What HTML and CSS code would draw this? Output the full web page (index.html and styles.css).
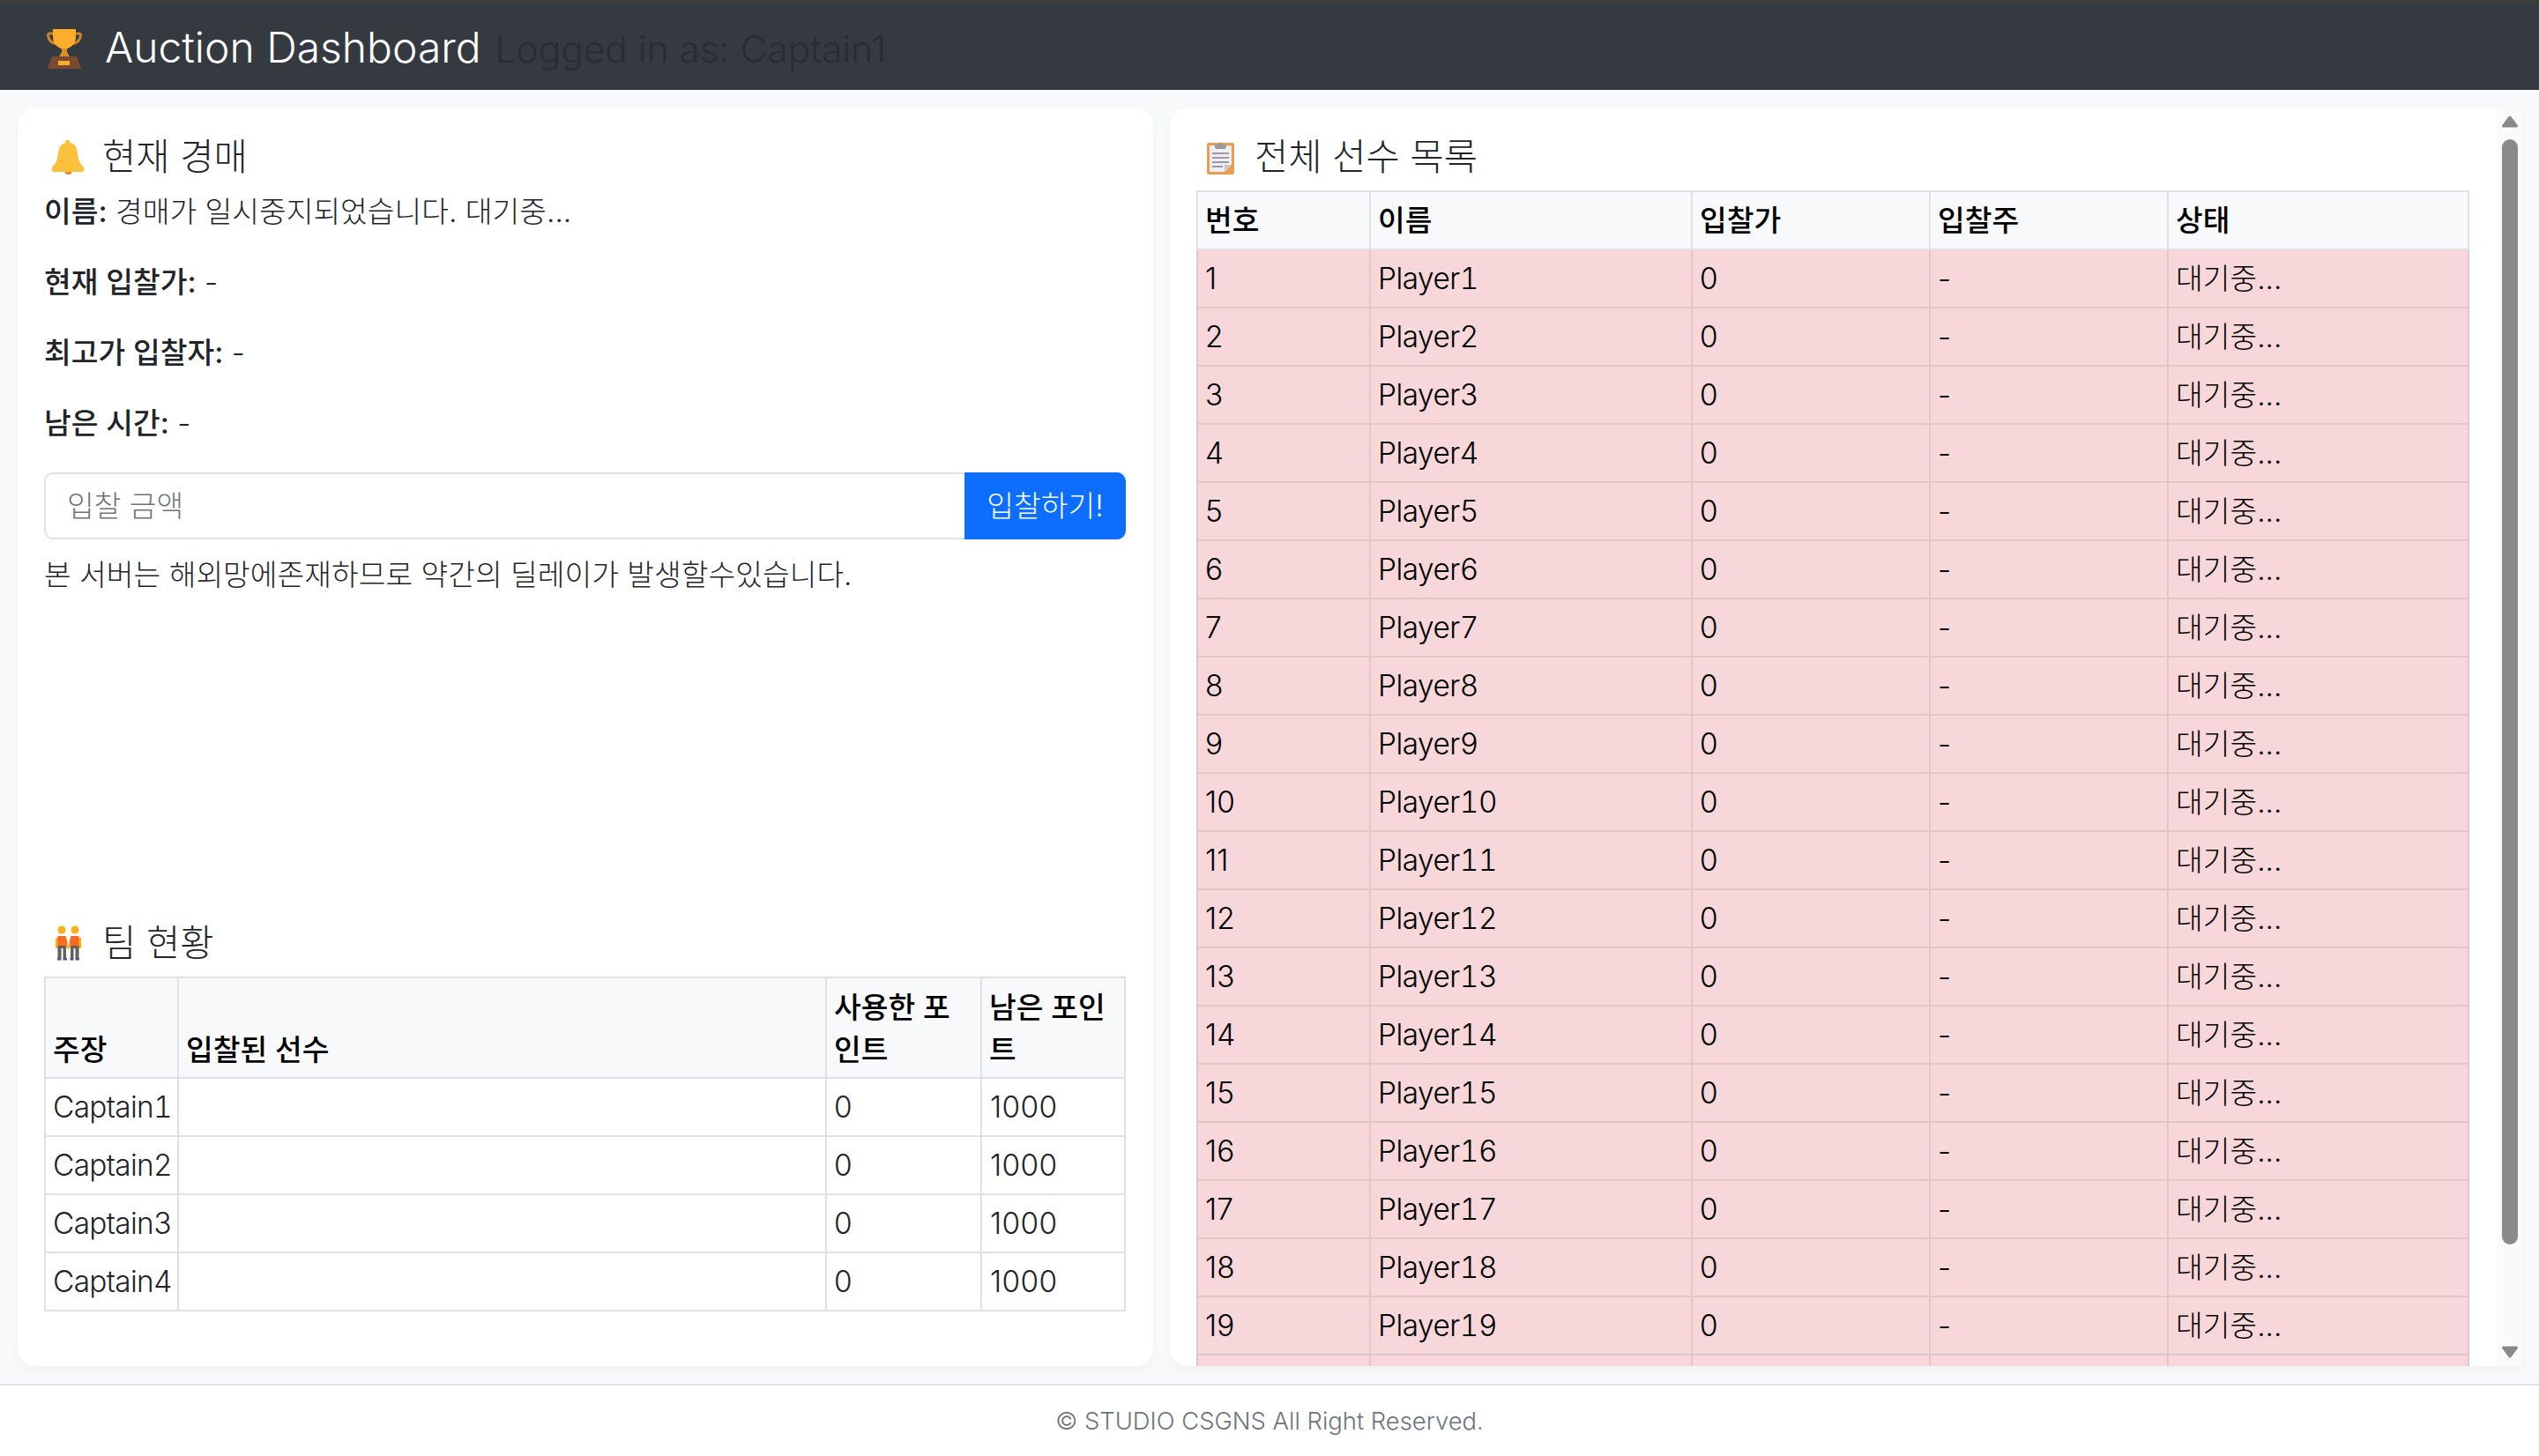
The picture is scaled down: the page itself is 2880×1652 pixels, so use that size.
FILE: index.html
```html
<!DOCTYPE html>
<html lang="ko">
<head>
    <meta charset="UTF-8">
    <title>Auction Dashboard</title>
    <link rel="stylesheet" href="styles.css">
</head>
<body>
    <header class="topbar">
        <span class="topbar__icon">
            <svg width="40" height="46" viewBox="0 0 40 46">
                <path d="M8 6H3.500a2 2 0 0 0-2 2.500c.8 5 3.500 8 8.500 9M32 6h4.500a2 2 0 0 1 2 2.500c-.8 5-3.500 8-8.500 9" fill="none" stroke="#c9822f" stroke-width="3"/>
                <path d="M7 1h26v9c0 8-5 11-10 13.500v5h-6v-5C12 21 7 18 7 10z" fill="#fdad29"/>
                <path d="M17 23h6v4l3 5H14l3-5z" fill="#d98f2d"/>
                <path d="M6 32h28l5 13a1 1 0 0 1-1 1H2a1 1 0 0 1-1-1z" fill="#7a4a30"/>
                <rect x="13" y="37" width="13" height="5" fill="#fdad29"/>
            </svg>
        </span>
        <span class="topbar__title">Auction Dashboard</span>
        <span class="topbar__user">Logged in as: Captain1</span>
    </header>

    <main class="dashboard">
        <section class="card card--auction">
            <div class="auction">
                <h4 class="card__title">
                    <span class="card__icon">
                        <svg width="37" height="39" viewBox="0 0 37 39">
                            <ellipse cx="18.5" cy="36.5" rx="4" ry="2.5" fill="#f4882b"/>
                            <path d="M18.500 0a2 2 0 0 1 1.800 2.900c5.500 1.200 8.200 5.500 8.700 11.900.5 7 2.500 11.500 6.500 15.500 1.700 1.700 1.200 5.700-1.500 5.700H2c-2.700 0-3.200-4-1.500-5.700 4-4 6-8.500 6.500-15.500.5-6.400 3.200-10.700 8.700-11.900A2 2 0 0 1 18.500 0z" fill="#fcc13b"/>
                        </svg>
                    </span>
                    현재 경매
                </h4>
                <p class="auction__line"><strong>이름:</strong> 경매가 일시중지되었습니다. 대기중...</p>
                <p class="auction__line"><strong>현재 입찰가:</strong> -</p>
                <p class="auction__line"><strong>최고가 입찰자:</strong> -</p>
                <p class="auction__line"><strong>남은 시간:</strong> -</p>
                <div class="bid">
                    <input class="bid__input" type="text" placeholder="입찰 금액">
                    <button class="bid__button">입찰하기!</button>
                </div>
                <p class="auction__note">본 서버는 해외망에존재하므로 약간의 딜레이가 발생할수있습니다.</p>
            </div>

            <div class="teams">
                <h4 class="card__title">
                    <span class="card__icon">
                        <svg width="29" height="40" viewBox="0 0 29 40">
                            <path d="M0 14h3v12H0zM26 14h3v12h-3zM11 24l2-5 1.500 4 1.500-4 2 5-3.500 3z" fill="#fbb11f"/>
                            <circle cx="7" cy="5" r="4.500" fill="#fbb11f"/>
                            <circle cx="22" cy="5" r="4.500" fill="#fbb11f"/>
                            <path d="M2.500 12h9l2 7-1.500 4H2.500zM17.500 12h9V23H17l-1.500-4z" fill="#fb6a1e"/>
                            <path d="M2.500 23h9.500v14H8.500V26h-2v11h-4zM17 23h9.500v14h-4V26h-2v11H17z" fill="#616161"/>
                            <path d="M2 37h4.500v2.500H2zM8.500 37H13v2.500H8.500zM16.500 37h4v2.500h-4zM22.500 37H27v2.500h-4.500z" fill="#6a4a8c"/>
                        </svg>
                    </span>
                    팀 현황
                </h4>
                <table class="grid grid--teams">
                    <thead>
                        <tr>
                            <th class="col-captain">주장</th>
                            <th>입찰된 선수</th>
                            <th class="col-used">사용한 포인트</th>
                            <th class="col-left">남은 포인트</th>
                        </tr>
                    </thead>
                    <tbody>
                        <tr><td>Captain1</td><td></td><td>0</td><td>1000</td></tr>
                        <tr><td>Captain2</td><td></td><td>0</td><td>1000</td></tr>
                        <tr><td>Captain3</td><td></td><td>0</td><td>1000</td></tr>
                        <tr><td>Captain4</td><td></td><td>0</td><td>1000</td></tr>
                    </tbody>
                </table>
            </div>
        </section>

        <section class="card card--players">
            <div class="players">
                <h4 class="card__title">
                    <span class="card__icon">
                        <svg width="31" height="39" viewBox="0 0 31 39">
                            <rect x="0" y="3" width="31" height="36" rx="2.500" fill="#ea9d4c"/>
                            <path d="M3 6h25v22l-8 8H3z" fill="#f1edf7"/>
                            <path d="M20 36v-8h8z" fill="#c9c4d0"/>
                            <path d="M9 8V5h4a2.500 2.500 0 0 1 5 0h4v3c0 1-1 2-2 2H11c-1 0-2-1-2-2z" fill="#9b9b9b"/>
                            <path d="M6 14h19v2H6zM6 19h19v2H6zM6 24h19v2H6zM6 29h12v2H6z" fill="#9a9a9f"/>
                        </svg>
                    </span>
                    전체 선수 목록
                </h4>
                <table class="grid grid--players">
                    <thead>
                        <tr>
                            <th class="col-no">번호</th>
                            <th class="col-name">이름</th>
                            <th class="col-price">입찰가</th>
                            <th class="col-bidder">입찰주</th>
                            <th>상태</th>
                        </tr>
                    </thead>
                    <tbody>
                        <tr><td>1</td><td>Player1</td><td>0</td><td>-</td><td>대기중...</td></tr>
                        <tr><td>2</td><td>Player2</td><td>0</td><td>-</td><td>대기중...</td></tr>
                        <tr><td>3</td><td>Player3</td><td>0</td><td>-</td><td>대기중...</td></tr>
                        <tr><td>4</td><td>Player4</td><td>0</td><td>-</td><td>대기중...</td></tr>
                        <tr><td>5</td><td>Player5</td><td>0</td><td>-</td><td>대기중...</td></tr>
                        <tr><td>6</td><td>Player6</td><td>0</td><td>-</td><td>대기중...</td></tr>
                        <tr><td>7</td><td>Player7</td><td>0</td><td>-</td><td>대기중...</td></tr>
                        <tr><td>8</td><td>Player8</td><td>0</td><td>-</td><td>대기중...</td></tr>
                        <tr><td>9</td><td>Player9</td><td>0</td><td>-</td><td>대기중...</td></tr>
                        <tr><td>10</td><td>Player10</td><td>0</td><td>-</td><td>대기중...</td></tr>
                        <tr><td>11</td><td>Player11</td><td>0</td><td>-</td><td>대기중...</td></tr>
                        <tr><td>12</td><td>Player12</td><td>0</td><td>-</td><td>대기중...</td></tr>
                        <tr><td>13</td><td>Player13</td><td>0</td><td>-</td><td>대기중...</td></tr>
                        <tr><td>14</td><td>Player14</td><td>0</td><td>-</td><td>대기중...</td></tr>
                        <tr><td>15</td><td>Player15</td><td>0</td><td>-</td><td>대기중...</td></tr>
                        <tr><td>16</td><td>Player16</td><td>0</td><td>-</td><td>대기중...</td></tr>
                        <tr><td>17</td><td>Player17</td><td>0</td><td>-</td><td>대기중...</td></tr>
                        <tr><td>18</td><td>Player18</td><td>0</td><td>-</td><td>대기중...</td></tr>
                        <tr><td>19</td><td>Player19</td><td>0</td><td>-</td><td>대기중...</td></tr>
                        <tr><td>20</td><td>Player20</td><td>0</td><td>-</td><td>대기중...</td></tr>
                    </tbody>
                </table>
            </div>
            <div class="scrollbar">
                <svg class="scrollbar__arrow" width="18" height="14" viewBox="0 0 18 14">
                    <path d="M9 2 16.500 12H1.500z" fill="#8a8a8a" stroke="#8a8a8a" stroke-width="3" stroke-linejoin="round"/>
                </svg>
                <span class="scrollbar__thumb"></span>
                <svg class="scrollbar__arrow scrollbar__arrow--down" width="18" height="14" viewBox="0 0 18 14">
                    <path d="M9 12 16.500 2H1.500z" fill="#8a8a8a" stroke="#8a8a8a" stroke-width="3" stroke-linejoin="round"/>
                </svg>
            </div>
        </section>
    </main>

    <footer class="footer">© STUDIO CSGNS All Right Reserved.</footer>
</body>
</html>
```

FILE: styles.css
```css
* {
    box-sizing: border-box;
}

body {
    margin: 0;
    height: 100vh;
    overflow: hidden;
    display: flex;
    flex-direction: column;
    background-color: #f8f9fa;
    color: #212529;
    font-family: 'Inter', 'Noto Sans CJK KR', sans-serif;
    font-size: 33.4px;
    font-weight: 300;
    line-height: 48px;
}

.topbar {
    height: 102px;
    flex: none;
    display: flex;
    align-items: baseline;
    padding: 26px 0 0 48px;
    background-color: #343a40;
    border-top: 4px solid #3d3d3d;
}

.topbar__icon {
    width: 49px;
    margin-right: 22px;
    display: flex;
    justify-content: center;
    align-self: flex-start;
    padding-top: 2px;
}

.topbar__title {
    color: #fff;
    font-size: 48px;
    margin-right: 16px;
}

.topbar__user {
    color: #212529;
    opacity: 0.6;
    font-size: 42.4px;
}

.dashboard {
    flex: 1;
    min-height: 0;
    display: grid;
    grid-template-columns: 1288px 1534px;
    gap: 19px;
    padding: 20px 19px 20px 20px;
}

.card {
    background-color: #fff;
    border-radius: 20px;
    box-shadow: 0 4px 12px rgba(0, 0, 0, 0.03);
    overflow: hidden;
}

.card--auction {
    display: flex;
    flex-direction: column;
    justify-content: space-between;
    padding: 32px 31px 62px 30px;
}

.card--players {
    position: relative;
    border-radius: 20px 0 0 20px;
}

.players {
    padding: 32px 60px 0 30px;
}

.card__title {
    display: flex;
    align-items: center;
    height: 48px;
    margin: 0 0 14px 0;
    font-size: 41.6px;
    font-weight: 300;
}

.card__icon {
    width: 54px;
    margin-right: 12px;
    display: flex;
    justify-content: center;
}

.auction__line {
    margin: 0 0 32px 0;
}

.auction__line strong {
    font-weight: 500;
}

.auction__note {
    margin: 16px 0 0 0;
}

.bid {
    display: flex;
    height: 76px;
}

.bid__input {
    flex: 1;
    min-width: 0;
    padding: 0 24px;
    border: 2px solid #dee2e6;
    border-right: none;
    border-radius: 10px 0 0 10px;
    font: inherit;
    color: #212529;
    outline: none;
}

.bid__input::placeholder {
    color: #6c757d;
}

.bid__button {
    width: 183px;
    border: none;
    border-radius: 0 10px 10px 0;
    background-color: #0d6efd;
    color: #fff;
    font: inherit;
    cursor: pointer;
}

.grid {
    width: 100%;
    border-collapse: collapse;
    table-layout: fixed;
}

.grid th,
.grid td {
    height: 66px;
    padding: 0 8px;
    border: 2px solid #dee2e6;
    text-align: left;
    vertical-align: middle;
}

.grid th {
    background-color: #f8f9fa;
    color: #000;
    font-weight: 500;
}

.grid--teams th {
    height: 114px;
    vertical-align: bottom;
    padding-bottom: 7px;
}

.grid--teams td:first-child {
    font-variant-numeric: tabular-nums;
    letter-spacing: -0.02em;
}

.grid--teams td:last-child {
    letter-spacing: 0.01em;
    padding-left: 9px;
}

.grid--players td {
    background-color: #f8d7da;
    border-color: #e2c6c9;
    color: #000;
}

.grid--players td:nth-child(2) {
    font-variant-numeric: tabular-nums;
    letter-spacing: -0.015em;
}

.col-captain { width: 151px; }
.col-used { width: 176px; }
.col-left { width: 163px; }
.col-no { width: 196px; }
.col-name { width: 365px; }
.col-price { width: 270px; }
.col-bidder { width: 270px; }

.scrollbar {
    position: absolute;
    top: 0;
    right: 0;
    bottom: 0;
    width: 29px;
    display: flex;
    flex-direction: column;
    align-items: center;
    padding: 9px 0;
    background-color: #fafafa;
}

.scrollbar__arrow--down {
    margin-top: auto;
}

.scrollbar__thumb {
    width: 18px;
    height: 1254px;
    margin-top: 13px;
    border-radius: 9px;
    background-color: #8a8a8a;
}

.footer {
    height: 82px;
    flex: none;
    display: flex;
    justify-content: center;
    align-items: center;
    background-color: #fff;
    border-top: 2px solid #dee2e6;
    color: #6c757d;
    font-size: 27.4px;
}
```
